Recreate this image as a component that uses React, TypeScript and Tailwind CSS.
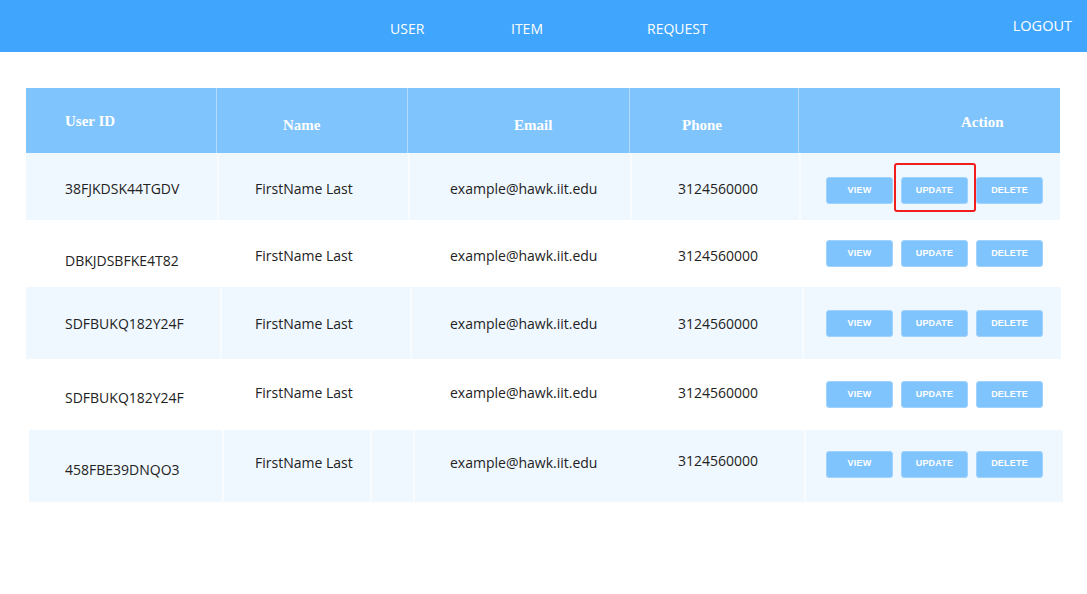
import React from 'react'

interface UserRow {
  id: string
  shaded: boolean
  box: string
  idCell: string
  idOff: string
  textOff: string
  phoneOff: string
  btnOff: string
  lines: string[]
}

const rows: UserRow[] = [
  { id: '38FJKDSK44TGDV', shaded: true, box: 'ml-[26px] w-[1034px] h-[67px]', idCell: 'w-[229px] pl-[39px]', idOff: 'mt-[3px]', textOff: 'mt-[3px]', phoneOff: 'mt-[3px]', btnOff: 'mt-[8px]', lines: ['left-[191px]', 'left-[382px]', 'left-[604px]', 'left-[773px]'] },
  { id: 'DBKJDSBFKE4T82', shaded: false, box: 'ml-[26px] w-[1034px] h-[67px]', idCell: 'w-[229px] pl-[39px]', idOff: 'mt-[14px]', textOff: 'mt-[4px]', phoneOff: 'mt-[4px]', btnOff: 'mt-[0px]', lines: [] },
  { id: 'SDFBUKQ182Y24F', shaded: true, box: 'ml-[26px] w-[1035px] h-[72px]', idCell: 'w-[229px] pl-[39px]', idOff: 'mt-[1px]', textOff: 'mt-[1px]', phoneOff: 'mt-[1px]', btnOff: 'mt-[1px]', lines: ['left-[194px]', 'left-[384px]', 'left-[776px]'] },
  { id: 'SDFBUKQ182Y24F', shaded: false, box: 'ml-[26px] w-[1035px] h-[71px]', idCell: 'w-[229px] pl-[39px]', idOff: 'mt-[6px]', textOff: 'mt-[-4px]', phoneOff: 'mt-[-4px]', btnOff: 'mt-[0px]', lines: [] },
  { id: '458FBE39DNQO3', shaded: true, box: 'ml-[29px] w-[1034px] h-[72px]', idCell: 'w-[226px] pl-[36px]', idOff: 'mt-[6px]', textOff: 'mt-[-8px]', phoneOff: 'mt-[-12px]', btnOff: 'mt-[-4px]', lines: ['left-[193px]', 'left-[341px]', 'left-[384px]', 'left-[775px]'] },
]

function ActionButton({ label }: { label: string }) {
  return (
    <button className="w-[67px] h-[27px] rounded-[3px] bg-[#80c4fe] border border-[#9fd2fd] text-white text-[9px] font-bold tracking-[0.2px] font-['Liberation_Sans',Arial,sans-serif]">
      {label}
    </button>
  )
}

export default function App() {
  return (
    <div className="w-[1087px] h-[594px] bg-white relative overflow-hidden font-['Open_Sans','Noto_Sans',sans-serif]">
      {/* top nav */}
      <nav className="h-[52px] bg-[#3fa5fd] flex items-center text-white text-[14px]">
        <div className="flex-1 flex pl-[390px] pt-[5px]">
          <span className="w-[121px]">USER</span>
          <span className="w-[136px]">ITEM</span>
          <span>REQUEST</span>
        </div>
        <span className="pr-[15px] text-[14.5px]">LOGOUT</span>
      </nav>

      {/* table head */}
      <div className="mt-[36px] ml-[26px] w-[1034px] h-[65px] bg-[#80c4fe] flex text-white font-bold text-[15px] font-['Liberation_Serif','DejaVu_Serif',serif]">
        <div className="w-[191px] pl-[39px] pt-[22px] border-r border-[#b3dafe]">User ID</div>
        <div className="w-[191px] pl-[66px] pt-[26px] border-r border-[#b3dafe]">Name</div>
        <div className="w-[222px] pl-[106px] pt-[26px] border-r border-[#b3dafe]">Email</div>
        <div className="w-[169px] pl-[52px] pt-[26px] border-r border-[#b3dafe]">Phone</div>
        <div className="flex-1 pl-[162px] pt-[23px]">Action</div>
      </div>

      {/* body rows */}
      {rows.map((r, i) => (
        <div
          key={i}
          className={`${r.box} relative flex items-center text-[14px] text-[#222] ${r.shaded ? 'bg-[#f0f8ff]' : 'bg-white'}`}
        >
          {r.lines.map((l, j) => (
            <div key={j} className={`absolute top-0 bottom-0 w-[2px] bg-[#f9fcff] ${l}`} />
          ))}
          <div className={`${r.idCell} ${r.idOff}`}>{r.id}</div>
          <div className={`w-[195px] ${r.textOff}`}>FirstName Last</div>
          <div className={`w-[228px] ${r.textOff}`}>example@hawk.iit.edu</div>
          <div className={`w-[148px] ${r.phoneOff}`}>3124560000</div>
          <div className={`flex gap-[8px] ${r.btnOff}`}>
            <ActionButton label="VIEW" />
            <ActionButton label="UPDATE" />
            <ActionButton label="DELETE" />
          </div>
        </div>
      ))}

      {/* highlight around first update button */}
      <div className="absolute left-[894px] top-[163px] w-[82px] h-[49px] border-2 border-[#f21d1d] rounded-[3px]" />
    </div>
  )
}
